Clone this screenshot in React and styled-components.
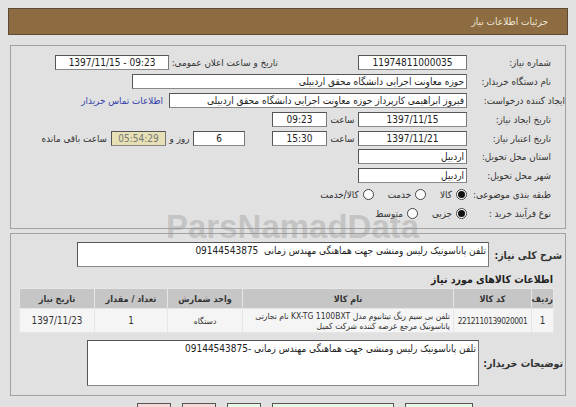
import React from 'react'
import styled, { createGlobalStyle } from 'styled-components'

const Global = createGlobalStyle`
  body {
    margin: 0;
    background: #e1e1e1;
    font-family: 'DejaVu Sans Condensed', 'DejaVu Sans', sans-serif;
    font-size: 9.5px;
    color: #222;
    overflow: hidden;
  }
`

const Page = styled.div`
  direction: rtl;
  position: relative;
  width: 576px;
  height: 407px;
  padding: 8px 8px 0 8px;
  box-sizing: border-box;
  overflow: hidden;
`

const Header = styled.div`
  height: 27px;
  box-sizing: border-box;
  background: #8c6c40;
  border: 1px solid #5c4a36;
  color: #efe6d6;
  display: flex;
  align-items: center;
  padding-right: 19px;
  font-size: 10px;
`

const Panel = styled.div`
  margin: ${p => p.$top}px 2px 0 2px;
  border: 1px solid #a2a2a2;
  padding: ${p => p.$pad};
  display: flex;
  flex-direction: column;
`

const Row = styled.div`
  display: flex;
  align-items: center;
  height: ${p => p.$h || 18.9}px;
  flex: none;
`

const Label = styled.div`
  width: ${p => p.$w || 84}px;
  margin-right: ${p => (p.$mr === undefined ? 14 : p.$mr)}px;
  flex: none;
  white-space: nowrap;
  font-weight: ${p => (p.$bold ? 'bold' : 'normal')};
  font-size: ${p => (p.$bold ? '10.5px' : '9.8px')};
  color: #333;
`

const Text = styled.span`
  flex: none;
  white-space: nowrap;
  width: ${p => (p.$w ? p.$w + 'px' : 'auto')};
  text-align: ${p => (p.$w ? 'center' : 'right')};
  margin: 0 ${p => p.$mr || 0}px 0 ${p => p.$ml || 0}px;
  font-size: 9.8px;
  color: #333;
`

const Field = styled.div`
  width: ${p => p.$w}px;
  height: ${p => p.$h || 15}px;
  flex: none;
  box-sizing: border-box;
  background: ${p => p.$bg || '#fff'};
  border: 1px solid #555;
  border-right-color: #777;
  border-bottom-color: #888;
  display: flex;
  align-items: ${p => (p.$top ? 'flex-start' : 'center')};
  justify-content: ${p => (p.$center ? 'center' : 'flex-start')};
  padding: ${p => (p.$top ? '2px 2px' : '0 2px')};
  overflow: hidden;
  white-space: nowrap;
  font-size: 10px;
  color: ${p => p.$color || '#222'};
  margin-right: ${p => p.$mr || 0}px;
`

const Ltr = styled.span`
  direction: ltr;
  unicode-bidi: embed;
`

const Radio = styled.span`
  width: 11px;
  height: 11px;
  flex: none;
  border-radius: 50%;
  border: 1px solid #444;
  background: #fff;
  box-sizing: border-box;
  display: flex;
  align-items: center;
  justify-content: center;
  margin-left: 4px;
  &::after {
    content: '';
    width: 7px;
    height: 7px;
    border-radius: 50%;
    background: ${p => (p.$on ? '#111' : 'transparent')};
  }
`

const RadioItem = styled.div`
  display: flex;
  align-items: center;
  margin-left: 14px;
`

const Link = styled.span`
  color: #3340a8;
  margin-right: 6px;
  font-size: 9.8px;
  white-space: nowrap;
`

const SubTitle = styled.div`
  font-weight: bold;
  font-size: 10.5px;
  line-height: 13px;
  color: #222;
  padding-right: 12px;
  margin: 6px 0 2px;
`

const Table = styled.table`
  margin-right: 11px;
  border-collapse: separate;
  border-spacing: 1px;
  table-layout: fixed;
  background: #e6e6e6;
  width: 534px;
  font-size: 9.5px;
`

const Th = styled.th`
  background: #c6c6c6;
  color: #333;
  font-weight: bold;
  font-size: 9px;
  height: 19px;
  padding: 0;
  width: ${p => p.$w}px;
`

const Td = styled.td`
  background: #f5f5f5;
  height: 23px;
  text-align: ${p => p.$align || 'center'};
  padding: 0 3px;
  color: #333;
  font-size: ${p => (p.$small ? '8.5px' : '9.8px')};
  line-height: 10px;
  white-space: nowrap;
  overflow: hidden;
`

const Code = styled.span`
  direction: ltr;
  unicode-bidi: embed;
  font-size: 8.3px;
  letter-spacing: -0.4px;
`

const Buttons = styled.div`
  display: flex;
  gap: 11px;
  margin: 7px 95px 0 0;
`

const Btn = styled.div`
  width: ${p => p.$w}px;
  height: 20px;
  flex: none;
  box-sizing: border-box;
  border: 1px solid #555;
  background: ${p => (p.$pink ? '#f7d8d8' : '#e8f6e6')};
`

const Mark = styled.div`
  position: absolute;
  left: ${p => p.$x}px;
  top: ${p => p.$y}px;
  font-family: 'Liberation Sans', Arial, sans-serif;
  font-weight: bold;
  font-size: ${p => p.$size}px;
  color: rgba(150, 150, 150, ${p => p.$a});
  direction: ltr;
  white-space: nowrap;
  pointer-events: none;
`

export default function App() {
  return (
    <Page>
      <Global />
      <Header>جزئیات اطلاعات نیاز</Header>

      <Panel $top={10} $pad="7px 0 5px 0">
        <Row>
          <Label>شماره نیاز:</Label>
          <Field $w={109} $center>11974811000035</Field>
          <Text $w={105} $mr={80}>تاریخ و ساعت اعلان عمومی:</Text>
          <Field $w={114} $center $mr={4}><Ltr>1397/11/15 - 09:23</Ltr></Field>
        </Row>
        <Row>
          <Label>نام دستگاه خریدار:</Label>
          <Field $w={335}>حوزه معاونت اجرایی دانشگاه محقق اردبیلی</Field>
        </Row>
        <Row>
          <Label $w={98} $mr={0}>ایجاد کننده درخواست:</Label>
          <Field $w={298}>فیروز ابراهیمی کارپرداز حوزه معاونت اجرایی دانشگاه محقق اردبیلی</Field>
          <Link>اطلاعات تماس خریدار</Link>
        </Row>
        <Row>
          <Label>تاریخ ایجاد نیاز:</Label>
          <Field $w={109} $center>1397/11/15</Field>
          <Text $w={31}>ساعت</Text>
          <Field $w={55} $center>09:23</Field>
        </Row>
        <Row>
          <Label>تاریخ اعتبار نیاز:</Label>
          <Field $w={109} $center>1397/11/21</Field>
          <Text $w={31}>ساعت</Text>
          <Field $w={55} $center>15:30</Field>
          <Field $w={52} $center $mr={27}>6</Field>
          <Text $w={27}>روز و</Text>
          <Field $w={55} $center $bg="#e6e0b4" $color="#777">05:54:29</Field>
          <Text $mr={4}>ساعت باقی مانده</Text>
        </Row>
        <Row>
          <Label>استان محل تحویل:</Label>
          <Field $w={109}>اردبیل</Field>
        </Row>
        <Row>
          <Label>شهر محل تحویل:</Label>
          <Field $w={109}>اردبیل</Field>
        </Row>
        <Row>
          <Label>طبقه بندی موضوعی:</Label>
          <RadioItem><Radio $on /><Text>کالا</Text></RadioItem>
          <RadioItem><Radio /><Text>خدمت</Text></RadioItem>
          <RadioItem><Radio /><Text>کالا/خدمت</Text></RadioItem>
        </Row>
        <Row>
          <Label>نوع فرآیند خرید :</Label>
          <RadioItem><Radio $on /><Text>جزیی</Text></RadioItem>
          <RadioItem><Radio /><Text>متوسط</Text></RadioItem>
        </Row>
      </Panel>

      <Panel $top={4} $pad="8px 0 9px 0">
        <Row $h={25}>
          <Label $bold $w={73} $mr={3}>شرح کلی نیاز:</Label>
          <Field $w={412} $h={25} $top>تلفن پاناسونیک رلیس ومنشی جهت هماهنگی مهندس زمانی&nbsp;&nbsp;09144543875</Field>
        </Row>
        <SubTitle>اطلاعات کالاهای مورد نیاز</SubTitle>
        <Table>
          <thead>
            <tr>
              <Th $w={21}>ردیف</Th>
              <Th $w={77}>کد کالا</Th>
              <Th $w={210}>نام کالا</Th>
              <Th $w={74}>واحد شمارش</Th>
              <Th $w={72}>تعداد / مقدار</Th>
              <Th $w={74}>تاریخ نیاز</Th>
            </tr>
          </thead>
          <tbody>
            <tr>
              <Td>1</Td>
              <Td><Code>2212110139020001</Code></Td>
              <Td $align="right" $small>
                تلفن بی سیم رنگ تیتانیوم مدل KX-TG 1100BXT نام تجارتی
                <br />
                پاناسونیک مرجع عرضه کننده شرکت کمیل
              </Td>
              <Td $small>دستگاه</Td>
              <Td>1</Td>
              <Td>1397/11/23</Td>
            </tr>
          </tbody>
        </Table>
        <Row $h={46} style={{ marginTop: 7 }}>
          <Label $bold $w={84} $mr={2}>توضیحات خریدار:</Label>
          <Field $w={392} $h={46} $top>تلفن پاناسونیک رلیس ومنشی جهت هماهنگی مهندس زمانی -09144543875</Field>
        </Row>
      </Panel>

      <Buttons>
        <Btn $w={68} />
        <Btn $w={122} />
        <Btn $w={34} />
        <Btn $w={34} $pink />
        <Btn $w={34} $pink />
      </Buttons>

      <Mark $x={166} $y={208} $size={33} $a={0.4}>ParsNamadData</Mark>
    </Page>
  )
}
